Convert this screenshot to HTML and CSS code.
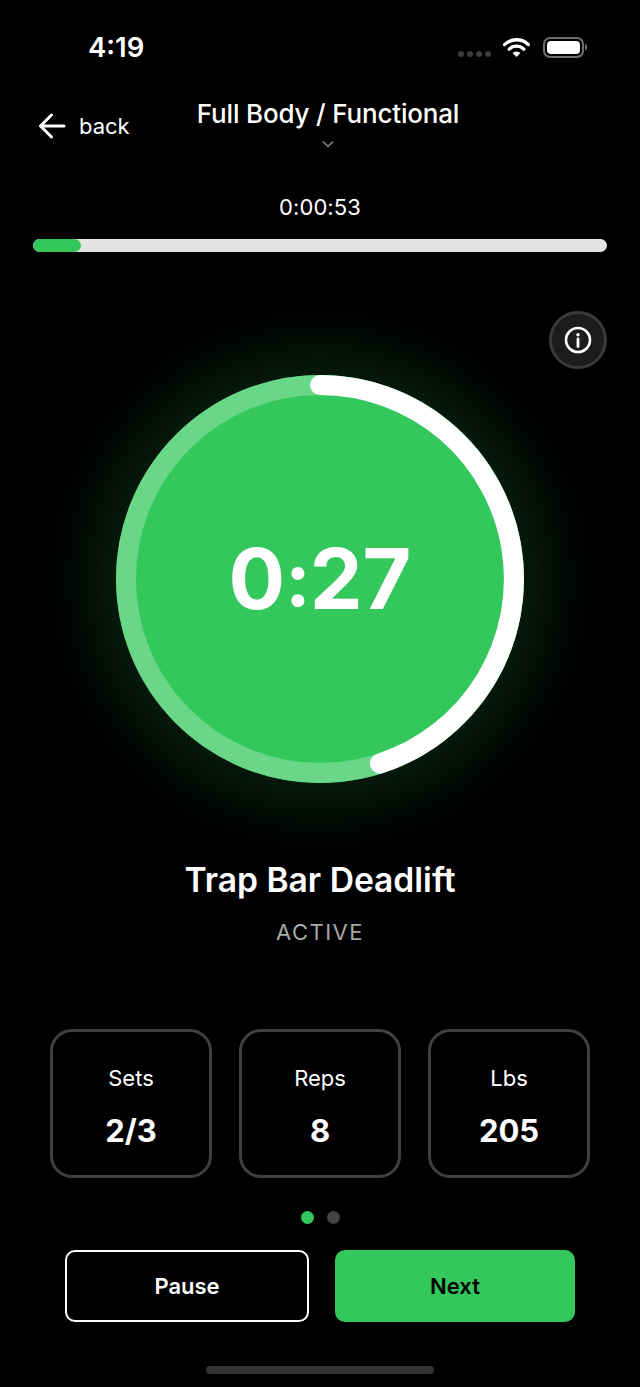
FILE: index.html
```html
<!DOCTYPE html>
<html lang="en">
<head>
<meta charset="utf-8">
<title>Workout</title>
<link rel="stylesheet" href="styles.css">
</head>
<body>
<main class="screen">
  <div class="status">
    <span class="clock">4:19</span>
    <div class="status-icons">
      <div class="signal"><i></i><i></i><i></i><i></i></div>
      <svg class="wifi" viewBox="0 0 26 20" width="27" height="21"><path d="M1.500 7.200a16.500 16.500 0 0 1 23 0" fill="none" stroke="#fff" stroke-width="3.200" stroke-linecap="round"/><path d="M6 11.600a10 10 0 0 1 14 0" fill="none" stroke="#fff" stroke-width="3.200" stroke-linecap="round"/><path d="M9.200 15.300a5.400 5.400 0 0 1 7.600 0L13 19.200z" fill="#fff"/></svg>
      <div class="battery"><div class="battery-body"><div class="battery-level"></div></div><div class="battery-cap"></div></div>
    </div>
  </div>

  <header class="header">
    <a class="back">
      <svg viewBox="0 0 28 26" width="28" height="26"><path d="M26 13H3M13.500 2 2.500 13l11 11" fill="none" stroke="#fff" stroke-width="3" stroke-linecap="round" stroke-linejoin="round"/></svg>
      <span>back</span>
    </a>
    <div class="title-block">
      <h1 class="title">Full Body / Functional</h1>
      <svg class="chevron" viewBox="0 0 12 8" width="12" height="8"><path d="M1 1.500l5 5 5-5" fill="none" stroke="#8a8a8a" stroke-width="1.500"/></svg>
    </div>
  </header>

  <section class="progress">
    <div class="elapsed">0:00:53</div>
    <div class="track"><div class="track-fill"></div></div>
  </section>

  <section class="stage">
    <button class="info" aria-label="Info">
      <svg viewBox="0 0 28 28" width="28" height="28"><circle cx="14" cy="14" r="12" fill="none" stroke="#fff" stroke-width="2.600"/><circle cx="14" cy="8.800" r="1.700" fill="#fff"/><path d="M14 13v7.500" stroke="#fff" stroke-width="2.800" stroke-linecap="round"/></svg>
    </button>
    <div class="dial">
      <svg class="dial-ring" viewBox="0 0 408 408" width="408" height="408">
        <circle cx="204" cy="204" r="204" fill="#34c85c"/>
        <circle cx="204" cy="204" r="194" fill="none" stroke="#6ad687" stroke-width="20"/>
        <path d="M204 10A194 194 0 0 1 263.900 388.500" fill="none" stroke="#fff" stroke-width="20" stroke-linecap="round"/>
      </svg>
      <div class="countdown">0<span class="colon">:</span>27</div>
    </div>
  </section>

  <section class="exercise">
    <h2 class="exercise-name">Trap Bar Deadlift</h2>
    <div class="exercise-state">ACTIVE</div>
  </section>

  <section class="stats">
    <div class="stat"><div class="stat-label">Sets</div><div class="stat-value">2/3</div></div>
    <div class="stat"><div class="stat-label">Reps</div><div class="stat-value">8</div></div>
    <div class="stat"><div class="stat-label">Lbs</div><div class="stat-value">205</div></div>
  </section>

  <div class="pager"><i class="on"></i><i></i></div>

  <div class="actions">
    <button class="btn btn-pause">Pause</button>
    <button class="btn btn-next">Next</button>
  </div>

  <div class="home-bar"></div>
</main>
</body>
</html>
```

FILE: styles.css
```css
* { box-sizing: border-box; }
html, body { margin: 0; padding: 0; background: #000; }
body { font-family: Inter, "Liberation Sans", sans-serif; color: #fff; }
.screen { width: 640px; height: 1387px; overflow: hidden; display: flex; flex-direction: column; background: #000; }

.status { height: 90px; flex: none; display: flex; justify-content: space-between; align-items: flex-start; padding: 30px 53px 0 88px; }
.clock { font-size: 27.500px; line-height: 34px; font-weight: 600; }
.status-icons { display: flex; align-items: center; height: 34px; }
.signal { display: flex; gap: 3px; margin-top: 13px; margin-right: 12px; }
.signal i { width: 6px; height: 6px; border-radius: 50%; background: #3c3c3c; }
.wifi { margin-right: 13px; margin-top: 1px; }
.battery { display: flex; align-items: center; }
.battery-body { width: 41px; height: 21px; border: 2px solid #6e6e6e; border-radius: 7px; padding: 2px; }
.battery-level { width: 100%; height: 100%; background: #fff; border-radius: 4px; }
.battery-cap { width: 2px; height: 6px; background: #6e6e6e; border-radius: 0 2px 2px 0; margin-left: 1px; }

.header { height: 66px; flex: none; position: relative; display: flex; justify-content: center; padding: 7px 0 0 16px; }
.back { position: absolute; left: 38px; top: 23px; display: flex; align-items: center; gap: 13px; font-size: 22px; line-height: 26px; font-weight: 400; }
.title-block { display: flex; flex-direction: column; align-items: center; }
.title { margin: 0; font-size: 26px; line-height: 34px; font-weight: 500; letter-spacing: -.18px; }
.chevron { margin-top: 9px; }

.progress { flex: none; padding: 0 33px; display: flex; flex-direction: column; align-items: stretch; margin-top: 37px; }
.elapsed { text-align: center; font-size: 22px; line-height: 28px; font-weight: 400; letter-spacing: .1px; }
.track { height: 13px; margin-top: 18px; border-radius: 7px; background: #e4e4e4; overflow: hidden; }
.track-fill { width: 48px; height: 100%; border-radius: 7px; background: #34c85c; }

.stage { flex: none; position: relative; height: 530px; margin-top: 59px; display: flex; justify-content: center; padding-top: 64px; }
.info { position: absolute; top: 0; right: 33px; width: 58px; height: 58px; padding: 0; border-radius: 50%; border: 3px solid #3a3a3a; background: #1c1c1c; display: flex; align-items: center; justify-content: center; }
.dial { position: relative; width: 408px; height: 408px; border-radius: 50%; box-shadow: 0 0 70px 22px rgba(52, 200, 92, .17); display: flex; align-items: center; justify-content: center; }
.dial-ring { position: absolute; inset: 0; }
.countdown { position: relative; font-size: 84px; line-height: 100px; font-weight: 700; margin-top: 1px; }
.colon { font-size: 76px; letter-spacing: -1px; position: relative; top: -3px; }

.exercise { flex: none; text-align: center; margin-top: 18px; }
.exercise-name { margin: 0; font-size: 33.600px; line-height: 42px; font-weight: 600; }
.exercise-state { margin-top: 17px; font-size: 22px; line-height: 28px; letter-spacing: 1.500px; color: #a8a8a8; }

.stats { flex: none; display: flex; justify-content: center; gap: 27px; margin-top: 83px; }
.stat { width: 162px; height: 149px; border: 3px solid #404040; border-radius: 22px; display: flex; flex-direction: column; align-items: center; padding-top: 32px; }
.stat-label { font-size: 22px; line-height: 28px; font-weight: 400; }
.stat-value { font-size: 31px; line-height: 40px; font-weight: 700; margin-top: 19px; }

.pager { flex: none; display: flex; justify-content: center; gap: 13px; margin-top: 33px; }
.pager i { width: 13px; height: 13px; border-radius: 50%; background: #444; }
.pager i.on { background: #34c85c; }

.actions { flex: none; display: flex; margin-top: 26px; padding-left: 65px; gap: 26px; }
.btn { height: 72px; border-radius: 10px; font-family: inherit; font-size: 22px; font-weight: 600; }
.btn-pause { width: 244px; background: #000; border: 2px solid #fff; color: #fff; }
.btn-next { width: 240px; background: #34c85c; border: 0; color: #000; }

.home-bar { flex: none; width: 228px; height: 8px; border-radius: 4px; background: #333; margin: 44px auto 0; }
```
